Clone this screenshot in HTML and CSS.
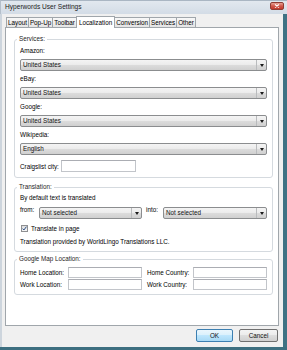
FILE: index.html
```html
<!DOCTYPE html>
<html lang="en">

<head>
    <meta charset="UTF-8">
    <meta name="viewport" content="width=device-width, initial-scale=1.0">
    <title>Hyperwords User Settings</title>
    <link rel="stylesheet" href="styles.css">
</head>

<body>
    <div class="window">
        <div class="titlebar">
            <span class="title">Hyperwords User Settings</span>
            <span class="close">
                <svg width="6" height="4" viewBox="0 0 6 4"><path d="M1 0.5 L5 3.5 M5 0.5 L1 3.5" stroke="#ffffff" stroke-width="1.1"/></svg>
            </span>
        </div>

        <div class="client">
            <div class="tabs">
                <span class="tab">Layout</span>
                <span class="tab">Pop-Up</span>
                <span class="tab">Toolbar</span>
                <span class="tab active">Localization</span>
                <span class="tab">Conversion</span>
                <span class="tab">Services</span>
                <span class="tab">Other</span>
            </div>

            <div class="panel">
                <fieldset class="group services">
                    <legend>Services:</legend>

                    <label class="field-label">Amazon:</label>
                    <div class="select"><span>United States</span><i class="drop"><b class="arrow"></b></i></div>

                    <label class="field-label">eBay:</label>
                    <div class="select"><span>United States</span><i class="drop"><b class="arrow"></b></i></div>

                    <label class="field-label">Google:</label>
                    <div class="select"><span>United States</span><i class="drop"><b class="arrow"></b></i></div>

                    <label class="field-label">Wikipedia:</label>
                    <div class="select"><span>English</span><i class="drop"><b class="arrow"></b></i></div>

                    <div class="inline-row">
                        <label>Craigslist city:</label>
                        <div class="textbox city"></div>
                    </div>
                </fieldset>

                <fieldset class="group translation">
                    <legend>Translation:</legend>
                    <div class="line">By default text is translated</div>
                    <div class="lang-row">
                        <label>from:</label>
                        <div class="select"><span>Not selected</span><i class="drop"><b class="arrow"></b></i></div>
                        <label class="into">into:</label>
                        <div class="select"><span>Not selected</span><i class="drop"><b class="arrow"></b></i></div>
                    </div>
                    <div class="check-row">
                        <span class="checkbox">
                            <svg width="5" height="5" viewBox="0 0 5 5"><path d="M0.6 2.6 L1.9 4 L4.4 0.7" fill="none" stroke="#2c4f86" stroke-width="1"/></svg>
                        </span>
                        <span>Translate in page</span>
                    </div>
                    <div class="line credit">Translation provided by WorldLingo Translations LLC.</div>
                </fieldset>

                <fieldset class="group map">
                    <legend>Google Map Location:</legend>
                    <div class="map-grid">
                        <label>Home Location:</label>
                        <div class="textbox"></div>
                        <label class="second">Home Country:</label>
                        <div class="textbox"></div>
                        <label>Work Location:</label>
                        <div class="textbox"></div>
                        <label class="second">Work Country:</label>
                        <div class="textbox"></div>
                    </div>
                </fieldset>
            </div>

            <div class="buttons">
                <button class="btn default">OK</button>
                <button class="btn cancel">Cancel</button>
            </div>
        </div>
    </div>
</body>

</html>
```

FILE: styles.css
```css
* {
    box-sizing: border-box;
}

body {
    margin: 0;
    font-family: "Liberation Sans", Arial, sans-serif;
    font-size: 6.3px;
    color: #000000;
    background-color: #ffffff;
}

.window {
    width: 287px;
    height: 350px;
    display: flex;
    flex-direction: column;
    background-color: #f0f0f0;
    border-bottom: 3px solid #3d6f80;
}

.titlebar {
    height: 14px;
    display: flex;
    align-items: flex-start;
    justify-content: space-between;
    padding: 0 3px 0 4px;
    background: linear-gradient(#e2e8ef, #d3dce6);
    border-top: 1px solid #aab6c3;
    border-left: 1px solid #b4bfcb;
}

.title {
    font-size: 6.6px;
    line-height: 11px;
    color: #1b1b1b;
}

.close {
    width: 14px;
    height: 8px;
    margin-top: 1px;
    display: flex;
    align-items: center;
    justify-content: center;
    background: linear-gradient(#e9a195, #d0574a 50%, #c2392c);
    border: 1px solid #8f3c34;
    border-radius: 2px;
}

.client {
    flex: 1;
    display: flex;
    flex-direction: column;
    padding: 3px 4px 0 3px;
    border-left: 2px solid #cdd5dd;
    border-right: 4px solid #3f7284;
}

.tabs {
    display: flex;
    align-items: flex-end;
    height: 10px;
    padding-left: 1px;
}

.tab {
    height: 10px;
    padding: 0 1px;
    line-height: 10px;
    border: 1px solid #a0a6ab;
    border-bottom: none;
    border-right: none;
    background: linear-gradient(#f8f8f8, #e4e4e4);
    white-space: nowrap;
}

.tab:last-child {
    border-right: 1px solid #a0a6ab;
}

.tab.active {
    height: 12px;
    margin-bottom: -1px;
    padding: 0 2px;
    line-height: 11px;
    background: #ffffff;
    border-right: 1px solid #a0a6ab;
    z-index: 1;
}

.tab.active + .tab {
    border-left: none;
}

.panel {
    height: 299px;
    background-color: #ffffff;
    border: 1px solid #a0a6ab;
    padding: 7px 5px 0 8px;
}

.group {
    margin: 0;
    padding: 0 5px 5px 5px;
    border: 1px solid #d5dadf;
    border-radius: 3px;
    min-width: 0;
}

.group legend {
    padding: 0 2px;
    margin-left: -3px;
    line-height: 8px;
    color: #1e1e1e;
}

.translation {
    margin-top: 5px;
}

.map {
    margin-top: 3px;
    padding-bottom: 4px;
}

.field-label {
    display: block;
    line-height: 8px;
    margin: 4px 0;
}

.select {
    flex: 1;
    height: 12px;
    display: flex;
    align-items: stretch;
    border: 1px solid #8b8d8f;
    border-radius: 2px;
    background: linear-gradient(#f4f4f4, #ebebeb 50%, #dcdcdc 50%, #d0d0d0);
}

.select span {
    flex: 1;
    padding-left: 2px;
    line-height: 10px;
    color: #111111;
}

.drop {
    width: 10px;
    display: flex;
    align-items: center;
    justify-content: center;
    border-left: 1px solid #b9bbbd;
}

.arrow {
    width: 0;
    height: 0;
    border-left: 2.5px solid transparent;
    border-right: 2.5px solid transparent;
    border-top: 3px solid #1a1a1a;
}

.inline-row {
    display: flex;
    align-items: center;
    gap: 2px;
    margin-top: 5px;
}

.textbox {
    height: 12px;
    border: 1px solid #c2c5ca;
    border-top-color: #abadb3;
    background-color: #ffffff;
}

.city {
    width: 75px;
}

.line {
    margin-top: 3px;
    line-height: 8px;
}

.lang-row {
    display: grid;
    grid-template-columns: 19px 103px 21px 104px;
    margin-top: 5px;
}

.lang-row label {
    line-height: 6px;
}

.lang-row .into {
    padding-left: 4px;
}

.check-row {
    display: flex;
    align-items: center;
    gap: 3px;
    height: 8px;
    margin-top: 5px;
    padding-left: 1px;
}

.checkbox {
    width: 7px;
    height: 7px;
    display: flex;
    align-items: center;
    justify-content: center;
    border: 1px solid #8e8f91;
    background: linear-gradient(#dcdcdc, #f6f6f6);
}

.credit {
    margin-top: 6px;
}

.map-grid {
    display: grid;
    grid-template-columns: 48px 74px 51px 74px;
    row-gap: 1px;
    align-items: center;
    margin-top: 4px;
}

.map-grid .textbox {
    height: 11px;
}

.map-grid .second {
    padding-left: 5px;
}

.buttons {
    display: flex;
    justify-content: flex-end;
    gap: 6px;
    padding: 3px 1px 0 0;
}

.btn {
    height: 13px;
    padding: 0;
    font-family: "Liberation Sans", Arial, sans-serif;
    font-size: 6.3px;
    color: #111111;
    border: 1px solid #707070;
    border-radius: 2px;
    background: linear-gradient(#f3f3f3, #ebebeb 50%, #dddddd 50%, #cfcfcf);
}

.btn.default {
    width: 37px;
    border-color: #3c7fb1;
    background: linear-gradient(#eaf6fd, #d9f0fc 50%, #bee6fd 50%, #a7d9f5);
}

.btn.cancel {
    width: 39px;
}
```
